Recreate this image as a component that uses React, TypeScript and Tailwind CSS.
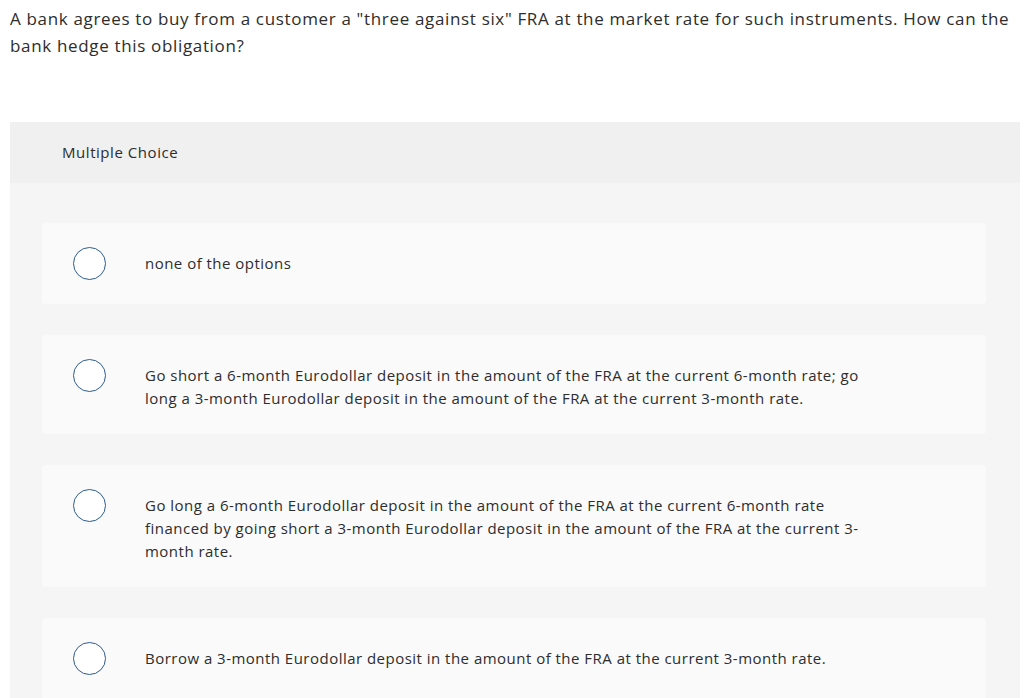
const options = [
  "none of the options",
  "Go short a 6-month Eurodollar deposit in the amount of the FRA at the current 6-month rate; go long a 3-month Eurodollar deposit in the amount of the FRA at the current 3-month rate.",
  "Go long a 6-month Eurodollar deposit in the amount of the FRA at the current 6-month rate financed by going short a 3-month Eurodollar deposit in the amount of the FRA at the current 3-month rate.",
  "Borrow a 3-month Eurodollar deposit in the amount of the FRA at the current 3-month rate.",
]

const Option = ({ text }: { text: string }) => {
  return (
    <div className="flex items-start rounded bg-[#fafafa] pl-[31px] pr-4 py-6">
      <div className="h-[33px] w-[33px] shrink-0 rounded-full border-[1.5px] border-[#2f5b8c] bg-white" />
      <p className="ml-[39px] mt-[5px] w-[730px] text-[15px] leading-[23px] tracking-[0.48px] text-[#2d2d2d]">
        {text}
      </p>
    </div>
  )
}

export default function App() {
  return (
    <div className="min-h-[698px] bg-white font-['Open_Sans',sans-serif]">
      <p className="px-[10px] pt-[5px] text-[17px] leading-[27px] tracking-[0.66px] text-[#2d2d2d]">
        A bank agrees to buy from a customer a "three against six" FRA at the market rate for such instruments. How can the bank hedge this obligation?
      </p>
      <div className="ml-[10px] mr-[4px] mt-[63px]">
        <div className="flex h-[61px] items-center bg-[#f0f0f0] pl-[52px] text-[15px] tracking-[0.55px] text-[#2d2d2d]">
          Multiple Choice
        </div>
        <div className="flex flex-col gap-[31px] bg-[#f5f5f5] pl-[32px] pr-[34px] pt-[40px] pb-10">
          {options.map((o) => (
            <Option key={o} text={o} />
          ))}
        </div>
      </div>
    </div>
  )
}
